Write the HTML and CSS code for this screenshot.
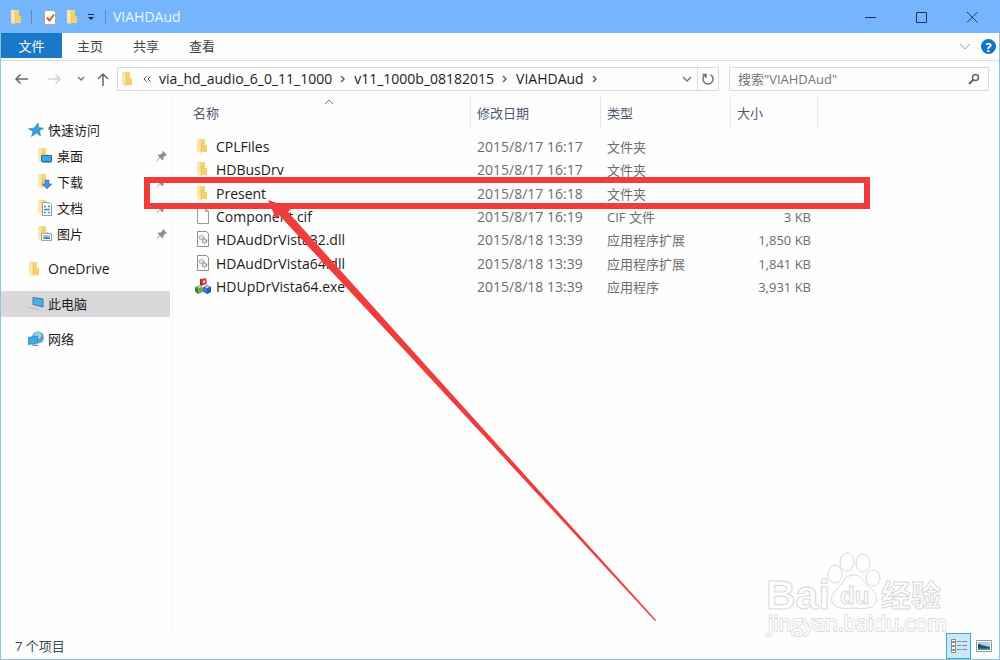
FILE: index.html
```html
<!DOCTYPE html>
<html lang="zh-CN">
<head>
    <meta charset="UTF-8">
    <meta name="viewport" content="width=device-width, initial-scale=1.0">
    <title>VIAHDAud</title>
    <link rel="stylesheet" href="styles.css">
</head>
<body>

<!-- shared icons -->
<svg class="sprite" aria-hidden="true">
    <symbol id="folder" viewBox="0 0 16 16">
        <path d="M3 1h8v12H3z" fill="#f6d67c"/>
        <path d="M3 1l4 1v13l-4-1z" fill="#fbe7a9"/>
        <path d="M11 7h2v7H7V4h4z" fill="#f4cf6b"/>
        <path d="M7 2v13" stroke="#e6bf62" stroke-width=".6"/>
    </symbol>
    <symbol id="pin" viewBox="0 0 12 12">
        <path d="M7 1l4 4-1 .6-.6-.2-2 2 .1 2-1.1.9L4 8 1 11l-.4-.4L3.600 7.600 1.600 5.500l1-1.100 2 .1 2-2L6.400 1.600z" fill="#87919d"/>
    </symbol>
    <symbol id="dll" viewBox="0 0 16 16">
        <path d="M2.500.5h9l2 2v13h-11z" fill="#fbfbfb" stroke="#8e8e8e"/>
        <circle cx="6.500" cy="6.500" r="2" fill="none" stroke="#9aa6b2" stroke-width="1.500" stroke-dasharray="1.500 .5"/>
        <circle cx="9.500" cy="10" r="2" fill="none" stroke="#7d8b99" stroke-width="1.500" stroke-dasharray="1.500 .5"/>
    </symbol>
</svg>

<div class="window">
    <header class="titlebar">
        <svg class="icon" viewBox="0 0 16 16"><use href="#folder"/></svg>
        <span class="divider"></span>
        <button class="quick" aria-label="属性">
            <svg class="icon" viewBox="0 0 16 16">
                <path d="M2.500 1.500h9l2 2v12h-11z" fill="#fff" stroke="#b0a8a2"/>
                <path d="M5 8.500l2.500 3 4.500-6" fill="none" stroke="#d0582a" stroke-width="2"/>
            </svg>
        </button>
        <button class="quick" aria-label="新建文件夹"><svg class="icon" viewBox="0 0 16 16"><use href="#folder"/></svg></button>
        <button class="quick more" aria-label="自定义快速访问工具栏">
            <svg width="8" height="8" viewBox="0 0 8 8"><path d="M1 1.500h6" stroke="#223"/><path d="M1 4h6L4 7z" fill="#223"/></svg>
        </button>
        <span class="divider"></span>
        <h1>VIAHDAud</h1>
        <div class="controls">
            <button aria-label="最小化"><svg viewBox="0 0 12 12"><path d="M1 6.500h11" stroke="#20305c"/></svg></button>
            <button aria-label="最大化"><svg viewBox="0 0 12 12"><path d="M1.500 1.500h10v10h-10z" fill="none" stroke="#20305c"/></svg></button>
            <button aria-label="关闭"><svg viewBox="0 0 12 12"><path d="M1 1l10.500 10.500M11.500 1L1 11.500" stroke="#20305c"/></svg></button>
        </div>
    </header>

    <nav class="ribbon">
        <button class="tab file">文件</button>
        <button class="tab">主页</button>
        <button class="tab">共享</button>
        <button class="tab">查看</button>
        <div class="ribbon-end">
            <button aria-label="展开功能区"><svg width="12" height="8" viewBox="0 0 12 8"><path d="M1 1l5 5 5-5" fill="none" stroke="#a5a5a5"/></svg></button>
            <button class="help" aria-label="帮助">?</button>
        </div>
    </nav>

    <div class="toolbar">
        <div class="history">
            <button aria-label="后退"><svg width="14" height="12" viewBox="0 0 14 12"><path d="M14 6H2M6.500 1.500L2 6l4.500 4.500" fill="none" stroke="#666" stroke-width="1.500"/></svg></button>
            <button aria-label="前进"><svg width="14" height="12" viewBox="0 0 14 12"><path d="M0 6h12M7.500 1.500L12 6l-4.500 4.500" fill="none" stroke="#d2d2d2" stroke-width="1.500"/></svg></button>
            <button aria-label="最近浏览的位置"><svg width="8" height="6" viewBox="0 0 8 6"><path d="M1 1l3 3 3-3" fill="none" stroke="#777" stroke-width="1.500"/></svg></button>
            <button aria-label="上移"><svg width="12" height="14" viewBox="0 0 12 14"><path d="M6 14V2M1 7l5-5 5 5" fill="none" stroke="#666" stroke-width="1.500"/></svg></button>
        </div>
        <div class="address">
            <svg class="icon" viewBox="0 0 16 16"><use href="#folder"/></svg>
            <svg class="skip" width="8" height="6" viewBox="0 0 8 6"><path d="M3.500.5L1 3l2.500 2.500M7.500.5L5 3l2.500 2.500" fill="none" stroke="#555"/></svg>
            <a href="#">via_hd_audio_6_0_11_1000</a>
            <svg width="6" height="8" viewBox="0 0 6 8"><path d="M1 1l3 3-3 3" fill="none" stroke="#666" stroke-width="1.500"/></svg>
            <a href="#">v11_1000b_08182015</a>
            <svg width="6" height="8" viewBox="0 0 6 8"><path d="M1 1l3 3-3 3" fill="none" stroke="#666" stroke-width="1.500"/></svg>
            <a href="#">VIAHDAud</a>
            <svg width="6" height="8" viewBox="0 0 6 8"><path d="M1 1l3 3-3 3" fill="none" stroke="#666" stroke-width="1.500"/></svg>
            <button class="drop" aria-label="以前的位置"><svg width="10" height="8" viewBox="0 0 10 8"><path d="M1 2l4 4 4-4" fill="none" stroke="#777" stroke-width="1.500"/></svg></button>
            <button class="refresh" aria-label="刷新"><svg width="14" height="14" viewBox="0 0 14 14"><path d="M9.500 2.700a5 5 0 1 1-5 0M1.500 2.500h3.500v3.500" fill="none" stroke="#707070" stroke-width="1.500"/></svg></button>
        </div>
        <div class="search">
            <input type="text" placeholder='搜索"VIAHDAud"' aria-label="搜索">
            <svg width="12" height="12" viewBox="0 0 12 12"><circle cx="7.500" cy="4.500" r="3" fill="none" stroke="#666" stroke-width="1.500"/><path d="M5.500 6.500L1 11" stroke="#666" stroke-width="2"/></svg>
        </div>
    </div>

    <div class="content">
        <aside class="sidebar">
            <ul>
                <li><a href="#"><svg class="icon" viewBox="0 0 16 16"><path d="M10 1l.7 4.600 4.800.6-4 2.600 1 5.200L8.700 11 3.500 14.500 5 9.500.5 6.700l5.300-.5z" fill="#3a9fe0" stroke="#2b84c4" stroke-width=".6"/></svg>快速访问</a></li>
                <li class="sub"><a href="#"><svg class="icon" viewBox="0 0 16 16"><use href="#folder" x="-2" y="-1"/><path d="M4.500 7.500h10v6h-10z" fill="#36a9ec" stroke="#2a70a4"/><path d="M5 14.500h9" stroke="#8fa6b5"/></svg>桌面</a><svg class="pin"><use href="#pin"/></svg></li>
                <li class="sub"><a href="#"><svg class="icon" viewBox="0 0 16 16"><use href="#folder" x="-2" y="-1"/><path d="M8 6h4v4h3l-5 5-5-5h3z" fill="#4c8fd8" stroke="#3974b8" stroke-width=".6"/></svg>下载</a><svg class="pin"><use href="#pin"/></svg></li>
                <li class="sub"><a href="#"><svg class="icon" viewBox="0 0 16 16"><use href="#folder" x="-2" y="-1"/><path d="M5.500 2.500h7l2 2v11h-9z" fill="#fff" stroke="#8c9ba6"/><path d="M7 6.500h2M11 6.500h2M7 9.500h6M7 12.500h2M11 12.500h2" stroke="#3f89b8" stroke-width="1.500"/></svg>文档</a><svg class="pin"><use href="#pin"/></svg></li>
                <li class="sub"><a href="#"><svg class="icon" viewBox="0 0 16 16"><use href="#folder" x="-2" y="-1"/><path d="M4.500 7.500h10v7h-10z" fill="#fff" stroke="#9aa3aa"/><path d="M6 9h7v4H6z" fill="#8fc4e8"/><path d="M6 13l3-2 4 1v1z" fill="#4a7e97"/></svg>图片</a><svg class="pin"><use href="#pin"/></svg></li>
            </ul>
            <ul><li><a href="#"><svg class="icon" viewBox="0 0 16 16"><use href="#folder" x="-2"/></svg><span class="latin">OneDrive</span></a></li></ul>
            <ul><li class="current"><a href="#"><svg class="icon" viewBox="0 0 16 16"><path d="M5 1.500l10 1.500v8L5 8.500z" fill="#44b0ef" stroke="#4c7898"/><path d="M0 11l11 3" stroke="#a5b4c2"/></svg>此电脑</a></li></ul>
            <ul><li><a href="#"><svg class="icon" viewBox="0 0 16 16"><circle cx="10" cy="6.500" r="6" fill="#5ca5cc"/><path d="M6 3c3-3 6-2 8 1l-3 4-4-1z" fill="#9ed0d8"/><path d="M0 6.500L9.500 5v7L0 13.500z" fill="#3caaf0" stroke="#397eac" stroke-width=".8"/><path d="M4 14l6 .5" stroke="#6996b2" stroke-width="1.500"/></svg>网络</a></li></ul>
        </aside>

        <main>
            <table>
                <colgroup><col class="c-name"><col class="c-date"><col class="c-type"><col class="c-size"></colgroup>
                <thead>
                    <tr>
                        <th><button>名称<svg class="sort" width="10" height="6" viewBox="0 0 10 6"><path d="M1 5l4-4 4 4" fill="none" stroke="#777"/></svg></button></th>
                        <th><button>修改日期</button></th>
                        <th><button>类型</button></th>
                        <th><button>大小</button></th>
                    </tr>
                </thead>
                <tbody>
                    <tr><td class="name"><svg class="icon" viewBox="0 0 16 16"><use href="#folder" x="-1"/></svg>CPLFiles</td><td class="date">2015/8/17 16:17</td><td>文件夹</td><td class="size"></td></tr>
                    <tr><td class="name"><svg class="icon" viewBox="0 0 16 16"><use href="#folder" x="-1"/></svg>HDBusDrv</td><td class="date">2015/8/17 16:17</td><td>文件夹</td><td class="size"></td></tr>
                    <tr><td class="name"><svg class="icon" viewBox="0 0 16 16"><use href="#folder" x="-1"/></svg>Present</td><td class="date">2015/8/17 16:18</td><td>文件夹</td><td class="size"></td></tr>
                    <tr><td class="name"><svg class="icon" viewBox="0 0 16 16"><path d="M2.500.5h8l3 3v12h-11z" fill="#fff" stroke="#9a9a9a"/><path d="M10.500.5v3h3" fill="none" stroke="#9a9a9a"/></svg>Component.cif</td><td class="date">2015/8/17 16:19</td><td>CIF 文件</td><td class="size">3 KB</td></tr>
                    <tr><td class="name"><svg class="icon" viewBox="0 0 16 16"><use href="#dll"/></svg>HDAudDrVista32.dll</td><td class="date">2015/8/18 13:39</td><td>应用程序扩展</td><td class="size">1,850 KB</td></tr>
                    <tr><td class="name"><svg class="icon" viewBox="0 0 16 16"><use href="#dll"/></svg>HDAudDrVista64.dll</td><td class="date">2015/8/18 13:39</td><td>应用程序扩展</td><td class="size">1,841 KB</td></tr>
                    <tr><td class="name"><svg class="icon" viewBox="0 0 16 16"><path d="M5 1l6-1 1 6-6 2z" fill="#d8493a"/><path d="M5 1l2 1v6L5 7z" fill="#a82f27"/><path d="M0 9l5-2 3 3v4l-5 2-3-3z" fill="#6fae45"/><path d="M0 9l3 2v5l-3-3z" fill="#3f8230"/><path d="M8 9l4-2 4 2v5l-4 2-4-2z" fill="#3d7fce"/><path d="M12 11l4-2v5l-4 2z" fill="#245ca6"/><path d="M3 9l2-1 1 1-2 1M10 9l2-1 2 1-2 1M8 3l2-.5v2l-2 .5z" fill="#e3ecef"/></svg>HDUpDrVista64.exe</td><td class="date">2015/8/18 13:39</td><td>应用程序</td><td class="size">3,931 KB</td></tr>
                </tbody>
            </table>
        </main>
    </div>

    <footer class="status">
        <span>7 个项目</span>
        <div class="views">
            <button class="active" aria-label="详细信息">
                <svg width="18" height="14" viewBox="0 0 18 14"><path d="M1.500.5h4v13h-4z" fill="#fff" stroke="#888"/><path d="M2.500 3h2M2.500 7h2M2.500 11h2" stroke="#666" stroke-width="2"/><path d="M7 2.500h4M12 2.500h5M7 6.500h4M12 6.500h5M7 10.500h4M12 10.500h5" stroke="#7d8b93"/></svg>
            </button>
            <button aria-label="大缩略图">
                <svg width="16" height="12" viewBox="0 0 16 12"><path d="M.5.5h15v11H.5z" fill="#fff" stroke="#999"/><path d="M2 2h12v8H2z" fill="#a8d2ef"/><path d="M2 4c3 0 5 2 12 3v3H2z" fill="#28546a"/><path d="M2 8.500h12V10H2z" fill="#55978c"/></svg>
            </button>
        </div>
    </footer>

    <svg class="watermark" width="184" height="96" viewBox="0 0 184 96" aria-hidden="true">
        <g class="outline">
            <ellipse cx="71" cy="25" rx="7" ry="9"/>
            <ellipse cx="83" cy="13" rx="7" ry="9"/>
            <ellipse cx="99" cy="14" rx="7" ry="9"/>
            <ellipse cx="109" cy="29" rx="7" ry="8"/>
            <path d="M90 26c7 0 9 5 13 10 5 5 11 9 9 16-2 8-11 8-22 7-11 1-19 1-22-6-2-7 3-11 8-16 4-5 6-11 14-11z"/>
        </g>
        <text class="outline bai" x="2" y="60">Bai</text>
        <text class="outline du" x="76" y="55">du</text>
        <text class="outline cn" x="117" y="57">经验</text>
        <text class="outline site" x="4" y="82">jingyan.baidu.com</text>
    </svg>

    <!-- red frame round the Present row, with the arrow pointing at it -->
    <svg class="marker" width="730" height="450" viewBox="0 0 730 450" aria-hidden="true">
        <path d="M3 4h720v26H3z" fill="none" stroke="#f03c3c" stroke-width="6"/>
        <path d="M124 24l24 8-4 4 115 128 253 280-1 1-260-281L135 39l-3 4z" fill="#f03c3c"/>
    </svg>
</div>

</body>
</html>
```

FILE: styles.css
```css
* {
    box-sizing: border-box;
}
body {
    margin: 0;
    font-family: "Open Sans", "Noto Sans CJK SC", sans-serif;
    font-size: 13px;
    line-height: 20px;
    color: #1c1c1c;
}
button {
    display: flex;
    align-items: center;
    justify-content: center;
    padding: 0;
    border: 0;
    background: none;
    font: inherit;
    color: inherit;
}
a {
    color: inherit;
    text-decoration: none;
}
svg {
    flex: none;
}
.sprite {
    position: absolute;
    width: 0;
    height: 0;
}
.icon {
    width: 16px;
    height: 16px;
}
.window {
    position: relative;
    display: flex;
    flex-direction: column;
    min-height: 100vh;
    background: #fefefe;
    border: 1px solid #8cc4e0;
    border-top: 0;
}

/* title bar */
.titlebar {
    display: flex;
    align-items: center;
    height: 33px;
    margin: 0 -1px;
    padding: 0 3px 0 8px;
    background: #74b5fd;
}
.divider {
    width: 1px;
    height: 14px;
    margin: 0 10px 0 7px;
    background: #6289b8;
}
.quick {
    margin-right: 6px;
}
.quick.more {
    width: 10px;
    margin-right: 2px;
}
.quick.more + .divider {
    margin-right: 7px;
}
.titlebar h1 {
    margin: 0;
    font-size: 14px;
    font-weight: 400;
    color: #eef7ff;
}
.controls {
    display: flex;
    margin-left: auto;
}
.controls button {
    width: 51px;
    height: 33px;
}
.controls svg {
    width: 12px;
    height: 12px;
}

/* ribbon tabs */
.ribbon {
    display: flex;
    height: 28px;
    border-bottom: 1px solid #dcdcdc;
}
.tab {
    width: 56px;
    height: 25px;
    color: #444;
}
.tab.file {
    width: 61px;
    background: #1a78c8;
    color: #fff;
}
.ribbon-end {
    display: flex;
    align-items: center;
    gap: 10px;
    margin-left: auto;
    padding-right: 3px;
}
.help {
    width: 15px;
    height: 15px;
    border-radius: 50%;
    background: #0f76c7;
    color: #fff;
    font-weight: 700;
}

/* address and search */
.toolbar {
    display: flex;
    gap: 10px;
    padding: 6px 10px 6px 13px;
}
.history {
    display: flex;
    align-items: center;
    gap: 15px;
    margin-right: -2px;
}
.history button:nth-child(1) {
    margin-right: 5px;
}
.history button:nth-child(4) {
    margin-left: -3px;
}
.address {
    display: flex;
    flex: 1;
    align-items: center;
    height: 24px;
    border: 1px solid #dadada;
    padding-left: 1px;
    font-size: 14px;
}
.address a {
    margin: 0 8px;
}
.skip {
    margin-left: 8px;
}
.drop {
    width: 20px;
    margin-left: auto;
}
.refresh {
    width: 21px;
    height: 22px;
    border-left: 1px solid #dadada;
}
.search {
    display: flex;
    align-items: center;
    width: 260px;
    height: 24px;
    padding: 0 8px;
    border: 1px solid #dadada;
}
.search input {
    flex: 1;
    min-width: 0;
    padding: 0;
    border: 0;
    outline: 0;
    background: none;
    font: inherit;
}
.search input::placeholder {
    color: #757575;
}

/* folder tree */
.content {
    display: flex;
    flex: 1;
}
.sidebar {
    width: 172px;
    padding-top: 20px;
    border-right: 1px solid #f4f4f4;
}
.sidebar ul {
    margin: 0 0 9px;
    padding: 0;
    list-style: none;
}
.sidebar li {
    display: flex;
    align-items: center;
    justify-content: space-between;
    height: 26px;
    margin-right: 2px;
    padding: 0 2px 0 27px;
}
.sidebar li.sub {
    padding-left: 36px;
}
.sidebar li.current {
    background: #d9d7da;
}
.sidebar a {
    display: flex;
    align-items: center;
    gap: 4px;
}
.latin {
    font-size: 14px;
}
.pin {
    width: 12px;
    height: 12px;
}

/* file list */
main {
    flex: 1;
    padding-left: 14px;
}
table {
    width: 631px;
    height: 202px;
    table-layout: fixed;
    border-collapse: collapse;
}
.c-name {
    width: 284px;
}
.c-date,
.c-type {
    width: 130px;
}
.c-size {
    width: 87px;
}
th {
    height: 38px;
    padding: 0;
    vertical-align: top;
    font-weight: 400;
}
th button {
    position: relative;
    justify-content: flex-start;
    width: 100%;
    height: 31px;
    padding-left: 6px;
    border-right: 1px solid #e6e6e6;
    color: #4c5a70;
}
.sort {
    position: absolute;
    top: 2px;
    left: 50%;
    margin-left: -5px;
}
td {
    padding: 0 0 0 6px;
    color: #6d6d6d;
}
.name {
    padding-left: 8px;
    font-size: 14px;
    color: #1c1c1c;
}
.name .icon {
    margin-right: 5px;
    vertical-align: -2px;
}
.date {
    font-size: 14px;
}
.size {
    padding-right: 7px;
    text-align: right;
}

/* status bar */
.status {
    display: flex;
    align-items: center;
    justify-content: space-between;
    height: 27px;
    padding: 0 3px 0 14px;
    color: #3c4654;
}
.views {
    display: flex;
}
.views button {
    width: 25px;
    height: 26px;
}
.views .active {
    background: #cbe8f6;
    border: 1px solid #46a8cc;
}

/* overlays */
.watermark {
    position: absolute;
    right: 51px;
    bottom: 14px;
}
.outline {
    fill: #fefefe;
    stroke: #d9d9d9;
    stroke-width: 1px;
}
.bai {
    font: 700 41px "Liberation Sans", sans-serif;
}
.du {
    font: 700 24px "Liberation Sans", sans-serif;
}
.cn {
    font: 700 30px "Noto Sans CJK SC", sans-serif;
}
.site {
    font: 21px "Open Sans", sans-serif;
    stroke: #dedede;
    stroke-width: 2px;
    paint-order: stroke;
}
.marker {
    position: absolute;
    top: 176px;
    left: 143px;
    pointer-events: none;
}
```
